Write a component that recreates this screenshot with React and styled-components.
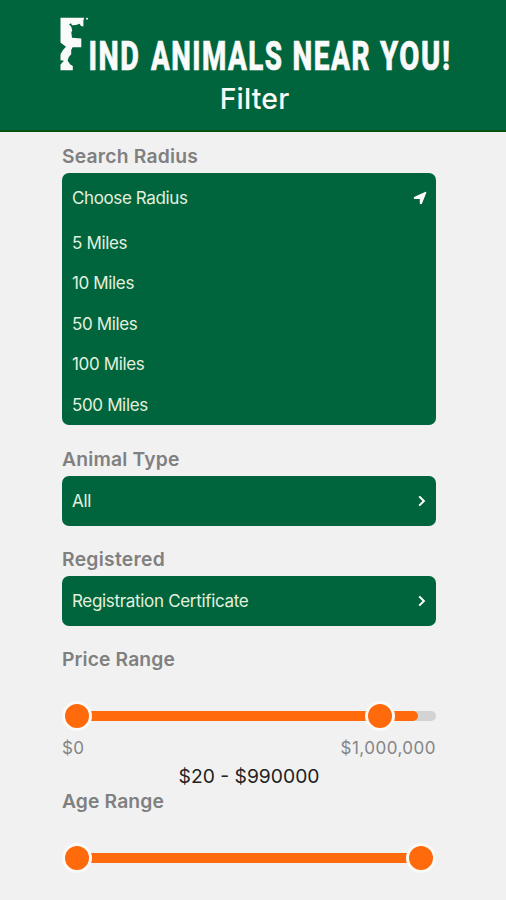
import React from "react";
import styled, { createGlobalStyle } from 'styled-components'

const GlobalStyle = createGlobalStyle`
    * {
        box-sizing: border-box;
    }
    body {
        margin: 0;
        background-color: #f1f1f1;
        font-family: Inter, "Liberation Sans", sans-serif;
    }
`

const StyledPage = styled.div`
    width: 506px;
    height: 900px;
    overflow: hidden;
    background-color: #f1f1f1;
`

const StyledHeader = styled.header`
    display: flex;
    flex-direction: column;
    align-items: center;
    height: 132px;
    padding-top: 12px;
    background-color: #00653d;
    border-bottom: 2px solid #005410;
    color: #fafafa;
`

const StyledLogo = styled.svg`
    display: block;
    width: 506px;
    height: 68px;
    fill: #fafafa;
    font-family: Roboto, "Liberation Sans", sans-serif;
    font-size: 41px;
    font-weight: 800;
    letter-spacing: 2.2px;
`

const StyledWord = styled.text`
    stroke: #fafafa;
    stroke-width: 0.7px;
`

const StyledSubtitle = styled.div`
    margin-left: 3px;
    font-size: 28.5px;
    font-weight: 500;
    line-height: 38px;
    letter-spacing: ${props => props.$spacing || 0}px;
`

const StyledContent = styled.main`
    display: flex;
    flex-direction: column;
    width: 374px;
    margin-left: 62px;
`

const StyledLabel = styled.div`
    height: 24px;
    margin-top: ${props => props.$top}px;
    font-size: 19.3px;
    font-weight: 600;
    line-height: 24px;
    letter-spacing: ${props => props.$spacing || 0}px;
    color: #808080;
    white-space: nowrap;
`

const StyledSelect = styled.div`
    margin-top: 5px;
    padding: 0 9px 0 10px;
    border-radius: 7px;
    background-color: #00653d;
    color: #e3f0df;
    font-size: 17px;
    white-space: nowrap;
`

const StyledSelectHead = styled.div`
    display: flex;
    align-items: center;
    justify-content: space-between;
    height: 50px;
    letter-spacing: ${props => props.$spacing || 0}px;
`

const StyledOption = styled.div`
    height: 40.4px;
    line-height: 40.4px;
    letter-spacing: ${props => props.$spacing || 0}px;
`

const StyledIcon = styled.svg`
    flex: none;
    width: 14px;
    height: 14px;
    fill: ${props => props.$outline ? 'none' : '#fff'};
    stroke: ${props => props.$outline ? '#fff' : 'none'};
    stroke-width: 2;
`

const StyledSlider = styled.div`
    position: relative;
    height: 10px;
    margin-top: ${props => props.$top}px;
    border-radius: 5px;
    background-color: #d3d3d3;
`

const StyledTrack = styled.div`
    height: 10px;
    margin-left: 15px;
    border-radius: 5px;
    background-color: #ff6a0d;
`

const StyledThumb = styled.div`
    position: absolute;
    top: -10px;
    width: 30px;
    height: 30px;
    border: 3px solid #fcfaf7;
    border-radius: 50%;
    background-color: #ff6a0d;
`

const StyledLimits = styled.div`
    display: flex;
    justify-content: space-between;
    height: 24px;
    margin-top: 15px;
    font-size: 17px;
    line-height: 24px;
    color: #858585;
`

const StyledLimit = styled.span`
    letter-spacing: ${props => props.$spacing || 0}px;
`

const StyledValue = styled.div`
    height: 26px;
    margin-top: 3px;
    text-align: center;
    font-size: 19.3px;
    line-height: 26px;
    color: #222;
`

const words = [
    {text: 'IND', x: 88.5, width: 52},
    {text: 'ANIMALS', x: 151, width: 132.5},
    {text: 'NEAR', x: 292.5, width: 78.5},
    {text: 'YOU!', x: 380, width: 71.5}
]

// the wordmark is set in a condensed face
const condense = 0.74

const miles = ['5 Miles', '10 Miles', '50 Miles', '100 Miles', '500 Miles']

const Logo = () => (
    <StyledLogo viewBox="0 12 506 68">
        <path d="M60.5 17.8H84.2L83.4 20.5V26.5L81 26L79.6 23.8L76 25L72 25.2L71 23.2L69 24.4L71.2 26.5L72.2 30.2L71.3 32.6L72 37.8L81.3 38.4V47.2H72.6L71.2 50V54.2L68.8 57L67.6 60.5L70 64.2L72.8 66V70.2H60.5V64.4L64 60.8L60.5 60.2V54.3L62.8 50.2L66 46.8L63.3 44.8L60.5 42.4Z"/>
        <circle cx="87" cy="18.8" r="1"/>
        {words.map(word => (
            <StyledWord
                key={word.text}
                transform={`translate(${word.x} 70) scale(${condense} 1)`}
                textLength={word.width / condense}
                lengthAdjust="spacingAndGlyphs"
            >
                {word.text}
            </StyledWord>
        ))}
    </StyledLogo>
)

const LocationIcon = () => (
    <StyledIcon viewBox="0 0 14 14">
        <path d="M12.6 0.8Q13.6 0.7 13.3 1.7L9 12.4Q8.4 13.4 7.4 13.1Q6.8 12.8 6.8 12.2V8.1H2Q0.7 7.9 0.7 6.9Q0.8 6.2 1.6 5.8Z"/>
    </StyledIcon>
)

const ChevronIcon = () => (
    <StyledIcon viewBox="0 0 14 14" $outline>
        <path d="M6.2 2.4L10.9 7L6.2 11.6"/>
    </StyledIcon>
)

// from, to: left edges of the thumbs, end: where the filled part stops
const Slider = ({top, from, to, end}) => (
    <StyledSlider $top={top}>
        <StyledTrack style={{width: end - 15}}/>
        <StyledThumb style={{left: from}}/>
        <StyledThumb style={{left: to}}/>
    </StyledSlider>
)

const App = () => (
    <StyledPage>
        <GlobalStyle/>
        <StyledHeader>
            <Logo/>
            <StyledSubtitle $spacing={0.15}>Filter</StyledSubtitle>
        </StyledHeader>
        <StyledContent>
            <StyledLabel $top={12} $spacing={0.2}>Search Radius</StyledLabel>
            <StyledSelect>
                <StyledSelectHead $spacing={-0.38}>
                    Choose Radius
                    <LocationIcon/>
                </StyledSelectHead>
                {miles.map(item => <StyledOption key={item} $spacing={-0.36}>{item}</StyledOption>)}
            </StyledSelect>
            <StyledLabel $top={22} $spacing={0.2}>Animal Type</StyledLabel>
            <StyledSelect>
                <StyledSelectHead $spacing={-0.3}>
                    All
                    <ChevronIcon/>
                </StyledSelectHead>
            </StyledSelect>
            <StyledLabel $top={21} $spacing={0.3}>Registered</StyledLabel>
            <StyledSelect>
                <StyledSelectHead $spacing={-0.32}>
                    Registration Certificate
                    <ChevronIcon/>
                </StyledSelectHead>
            </StyledSelect>
            <StyledLabel $top={21} $spacing={0.12}>Price Range</StyledLabel>
            <Slider top={40} from={0} to={303} end={356}/>
            <StyledLimits>
                <StyledLimit $spacing={0.3}>$0</StyledLimit>
                <StyledLimit $spacing={0.48}>$1,000,000</StyledLimit>
            </StyledLimits>
            <StyledValue>$20 - $990000</StyledValue>
            <StyledLabel $top={0} $spacing={0.12}>Age Range</StyledLabel>
            <Slider top={40} from={0} to={344} end={360}/>
        </StyledContent>
    </StyledPage>
)

export default App
